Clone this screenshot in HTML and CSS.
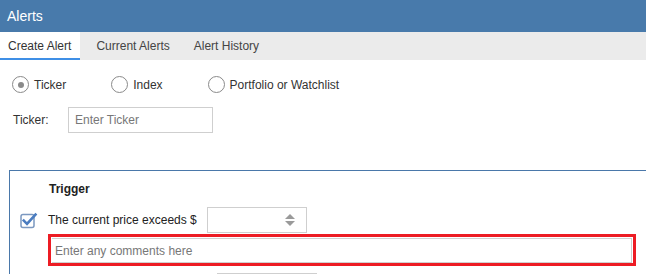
FILE: index.html
```html
<!DOCTYPE html>
<html>
<head>
<meta charset="utf-8">
<link rel="stylesheet" href="styles.css">
</head>
<body>
<div class="header">Alerts</div>
<div class="tabs">
  <div class="tab active">Create Alert</div>
  <div class="tab">Current Alerts</div>
  <div class="tab">Alert History</div>
</div>
<div class="radios">
  <label class="radio"><span class="circle checked"></span>Ticker</label>
  <label class="radio"><span class="circle"></span>Index</label>
  <label class="radio"><span class="circle"></span>Portfolio or Watchlist</label>
</div>
<div class="ticker-row">
  <span class="ticker-label">Ticker:</span>
  <div class="input ticker-input">Enter Ticker</div>
</div>
<div class="panel">
  <div class="panel-title">Trigger</div>
  <div class="check-row">
    <svg class="checkbox" width="18" height="17" viewBox="0 0 18 17">
      <rect x="1" y="2.5" width="13" height="13" rx="2" fill="#fff" stroke="#7b98c0" stroke-width="1.5"/>
      <path d="M3.8 8.6 L7 11.8 L15.5 2.5" fill="none" stroke="#4a7cc0" stroke-width="2.6" stroke-linecap="square"/>
    </svg>
    <span class="check-text">The current price exceeds $</span>
    <div class="input spin">
      <svg class="arrows" width="10" height="12" viewBox="0 0 10 12">
        <path d="M5 0 L10 5 L0 5 Z" fill="#9a9a9a"/>
        <path d="M0 7 L10 7 L5 12 Z" fill="#9a9a9a"/>
      </svg>
    </div>
  </div>
  <div class="comment-box">
    <div class="input comment">Enter any comments here</div>
  </div>
  <div class="next-row">
    <div class="input next"></div>
  </div>
</div>
</body>
</html>
```
FILE: styles.css
```css
html, body {
  margin: 0;
  padding: 0;
  background: #fff;
  overflow: hidden;
}
body {
  font-family: "Liberation Sans", Arial, sans-serif;
  font-size: 12px;
  color: #333;
  width: 646px;
  height: 274px;
}
.header {
  height: 32px;
  line-height: 33px;
  background: #487aab;
  color: #fff;
  font-size: 14px;
  padding-left: 7px;
  box-sizing: border-box;
}
.tabs {
  display: flex;
  gap: 8px;
  height: 28px;
  background: #ebebeb;
}
.tab {
  padding: 0 8px;
  line-height: 29px;
  color: #444;
  font-size: 12px;
}
.tab.active {
  background: #fff;
  color: #333;
  padding-right: 9px;
  border-bottom: 2px solid #3f8fe6;
  line-height: 28px;
  height: 26px;
}
.radios {
  display: flex;
  gap: 45px;
  padding: 16px 0 0 12px;
  height: 17px;
  align-items: center;
}
.radio {
  display: flex;
  align-items: center;
  gap: 5px;
  color: #333;
}
.circle {
  box-sizing: border-box;
  width: 17px;
  height: 17px;
  border: 1.5px solid #8a8a8a;
  border-radius: 50%;
  display: flex;
  align-items: center;
  justify-content: center;
}
.circle.checked::after {
  content: "";
  width: 6px;
  height: 6px;
  border-radius: 50%;
  background: #8a8a8a;
}
.ticker-row {
  display: flex;
  align-items: center;
  margin-top: 14px;
  padding-left: 13px;
}
.ticker-label {
  width: 55px;
  color: #333;
}
.input {
  box-sizing: border-box;
  border: 1px solid #cfcfcf;
  background: #fff;
  height: 26px;
  line-height: 24px;
  padding-left: 6px;
  color: #777;
}
.ticker-input {
  width: 145px;
}
.panel {
  margin: 37px 0 0 9px;
  border-top: 1px solid #4a78aa;
  border-left: 1px solid #4a78aa;
  padding: 11px 0 0 10px;
  height: 93px;
  overflow: hidden;
}
.panel-title {
  font-weight: bold;
  color: #222;
  margin-left: 29px;
  line-height: 14px;
}
.check-row {
  display: flex;
  align-items: center;
  margin-top: 11px;
  height: 26px;
}
.checkbox {
  width: 18px;
  height: 17px;
}
.check-text {
  margin-left: 10px;
  color: #222;
}
.spin {
  width: 100px;
  margin-left: 10px;
  position: relative;
}
.arrows {
  position: absolute;
  right: 11px;
  top: 6px;
}
.comment-box {
  margin: 1px 0 0 28px;
  width: 588px;
  box-sizing: border-box;
  border: 3px solid #ed1c24;
  padding: 1px 1px 0 1px;
  height: 32px;
}
.comment {
  height: 25px;
  line-height: 24px;
  padding-left: 3px;
  border-color: #d0d0d0;
  border-left: none;
}
.next-row {
  margin: 7px 0 0 197px;
}
.next {
  width: 100px;
}
```
